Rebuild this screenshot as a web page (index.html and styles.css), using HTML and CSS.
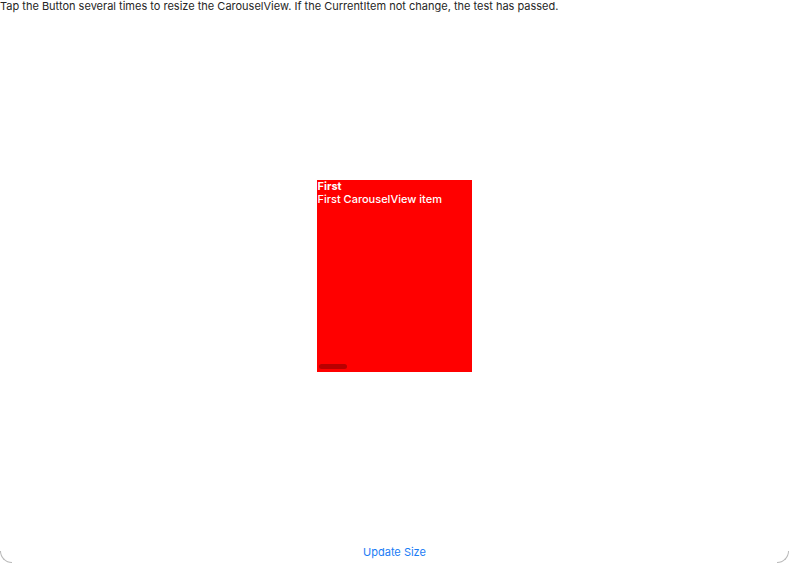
FILE: index.html
```html
<!DOCTYPE html>
<html>
<head>
<meta charset="utf-8">
<link rel="stylesheet" href="styles.css">
</head>
<body>
<div class="page">
  <div class="instructions">Tap the Button several times to resize the CarouselView. If the CurrentItem not change, the test has passed.</div>
  <div class="stage">
    <div class="carousel">
      <div class="item-title">First</div>
      <div class="item-desc">First CarouselView item</div>
      <div class="indicator"></div>
    </div>
  </div>
  <div class="footer">
    <button class="update-btn">Update Size</button>
  </div>
  <div class="corner corner-left"></div>
  <div class="corner corner-right"></div>
</div>
</body>
</html>
```

FILE: styles.css
```css
html, body {
  margin: 0;
  padding: 0;
  background: #ffffff;
}
.page {
  position: relative;
  width: 789px;
  height: 563px;
  display: flex;
  flex-direction: column;
  font-family: Inter, "Liberation Sans", sans-serif;
  overflow: hidden;
}
.instructions {
  height: 14px;
  font-size: 11px;
  line-height: 13px;
  color: #262626;
  white-space: nowrap;
}
.stage {
  height: 523px;
  display: flex;
  align-items: center;
  justify-content: center;
}
.carousel {
  position: relative;
  width: 155px;
  height: 192px;
  margin-left: -1px;
  background: #ff0000;
  color: #ffffff;
  font-size: 11px;
  line-height: 13px;
  font-weight: 500;
  padding: 0 1px;
  box-sizing: border-box;
}
.item-title {
  font-weight: 700;
}
.indicator {
  position: absolute;
  left: 2px;
  bottom: 3px;
  width: 28px;
  height: 5px;
  border-radius: 3px;
  background: #b80000;
}
.footer {
  flex: 1;
  display: flex;
  align-items: center;
  justify-content: center;
  padding-top: 3px;
}
.update-btn {
  border: none;
  background: none;
  padding: 0;
  font-family: Inter, "Liberation Sans", sans-serif;
  font-size: 11px;
  color: #1a7cf5;
}
.corner {
  position: absolute;
  bottom: 0;
  width: 12px;
  height: 12px;
  border-bottom: 1px solid #b8b8b8;
  box-sizing: border-box;
}
.corner-left {
  left: 0;
  border-left: 1px solid #b8b8b8;
  border-bottom-left-radius: 12px;
}
.corner-right {
  right: 0;
  border-right: 1px solid #b8b8b8;
  border-bottom-right-radius: 12px;
}
```
